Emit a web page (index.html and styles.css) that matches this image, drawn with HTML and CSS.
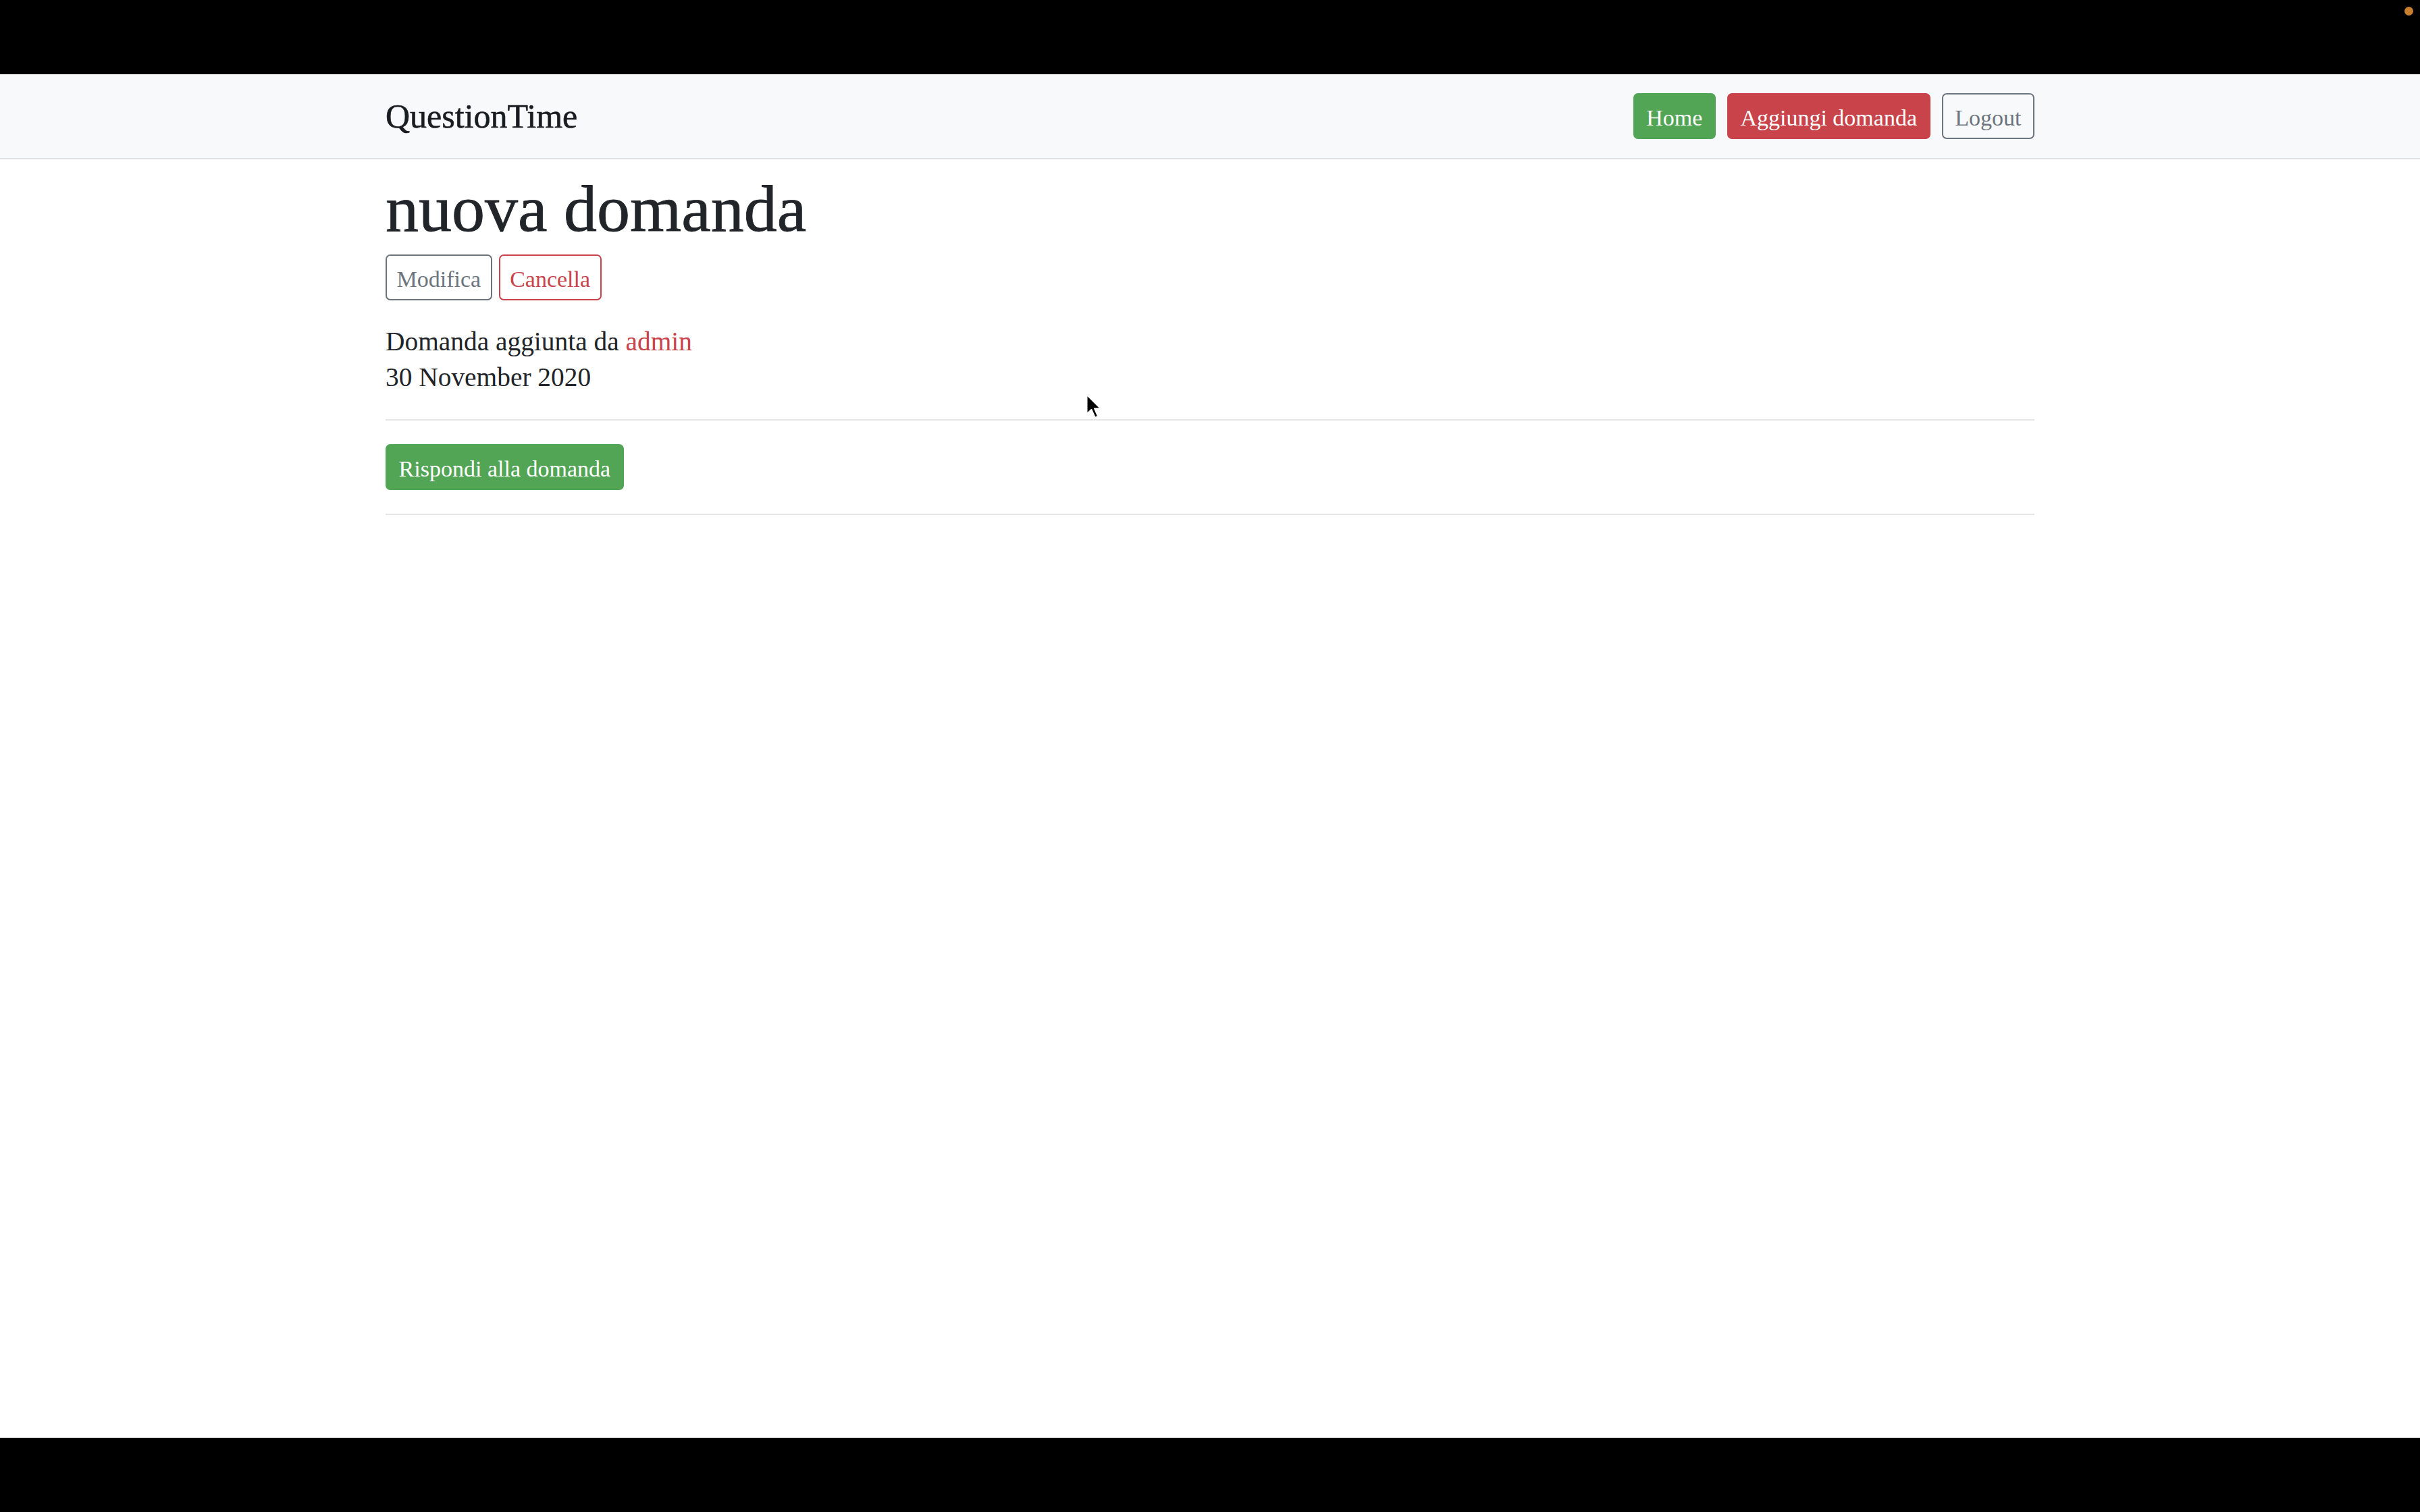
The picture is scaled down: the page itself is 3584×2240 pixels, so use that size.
FILE: index.html
```html
<!DOCTYPE html>
<html lang="it">
<head>
<meta charset="utf-8">
<title>QuestionTime</title>
<link rel="stylesheet" href="styles.css">
</head>
<body>
<div class="topbar"><span class="dot"></span></div>
<div class="page">
  <nav class="navbar">
    <div class="container nav-inner">
      <a class="brand" href="#">QuestionTime</a>
      <div class="nav-actions">
        <a class="btn btn-success" href="#">Home</a>
        <a class="btn btn-danger" href="#">Aggiungi domanda</a>
        <a class="btn btn-outline-secondary" href="#">Logout</a>
      </div>
    </div>
  </nav>
  <main class="container main">
    <h1 class="title">nuova domanda</h1>
    <div class="actions">
      <a class="btn btn-outline-secondary" href="#">Modifica</a>
      <a class="btn btn-outline-danger" href="#">Cancella</a>
    </div>
    <p class="meta">Domanda aggiunta da <a class="author" href="#">admin</a><br>30 November 2020</p>
    <hr class="rule">
    <div class="reply">
      <a class="btn btn-success" href="#">Rispondi alla domanda</a>
    </div>
    <hr class="rule">
  </main>
  <svg class="cursor" width="28" height="42" viewBox="0 0 24 36" aria-hidden="true">
    <path d="M2 2 L2 27 L8 21.5 L12.5 31.5 L16.5 29.8 L12.2 20 L20 20 Z" fill="#000" stroke="#fff" stroke-width="2" stroke-linejoin="round"/>
  </svg>
</div>
<div class="bottombar"></div>
</body>
</html>
```

FILE: styles.css
```css
html, body {
  margin: 0;
  padding: 0;
}

body {
  height: 2240px;
  display: flex;
  flex-direction: column;
  font-family: "Liberation Serif", "Times New Roman", serif;
  color: #212529;
  background: #ffffff;
  overflow: hidden;
}

.topbar {
  flex: none;
  height: 110px;
  background: #000000;
  position: relative;
}

.dot {
  position: absolute;
  left: 3561px;
  top: 10px;
  width: 13px;
  height: 13px;
  border-radius: 50%;
  background: #c8802e;
}

.page {
  flex: 1;
  position: relative;
  background: #ffffff;
}

.bottombar {
  flex: none;
  height: 110px;
  background: #000000;
}

.container {
  width: 2442px;
  margin: 0 auto;
}

.navbar {
  background: #f8f9fa;
  border-bottom: 2px solid #dee2e6;
}

.nav-inner {
  height: 124px;
  display: flex;
  align-items: center;
  justify-content: space-between;
}

.brand {
  font-size: 50px;
  line-height: 66px;
  color: #1a1d20;
  text-decoration: none;
  -webkit-text-stroke: 0.6px #1a1d20;
}

.nav-actions {
  display: flex;
  gap: 17px;
}

.btn {
  display: inline-block;
  box-sizing: border-box;
  height: 68px;
  padding: 12px 17.6px 6px;
  line-height: 46px;
  border: 2px solid transparent;
  border-radius: 7px;
  font-size: 34px;
  text-decoration: none;
  white-space: nowrap;
}

.btn-success {
  background: #52a555;
  border-color: #52a555;
  color: #ffffff;
}

.btn-danger {
  background: #c9434b;
  border-color: #c9434b;
  color: #ffffff;
}

.btn-outline-secondary {
  background: transparent;
  border-color: #6c757d;
  color: #6c757d;
}

.btn-outline-danger {
  background: transparent;
  border-color: #c9434b;
  color: #c9434b;
}

.main {
  padding-top: 20px;
}

.title {
  margin: 0 0 15px;
  font-size: 98px;
  line-height: 106px;
  font-weight: 400;
  color: #212529;
  -webkit-text-stroke: 0.8px #212529;
}

.actions {
  display: flex;
  gap: 10px;
  margin-bottom: 35px;
}

.actions .btn {
  padding-left: 14.5px;
  padding-right: 14.5px;
}

.meta {
  margin: 0 0 35px;
  font-size: 39.4px;
  line-height: 52.8px;
}

.author {
  color: #c9434b;
  text-decoration: none;
}

.rule {
  margin: 35px 0;
  border: 0;
  border-top: 2px solid rgba(0, 0, 0, 0.1);
  height: 0;
}

.reply {
  display: flex;
}

.cursor {
  position: absolute;
  left: 1607px;
  top: 472px;
}
```
